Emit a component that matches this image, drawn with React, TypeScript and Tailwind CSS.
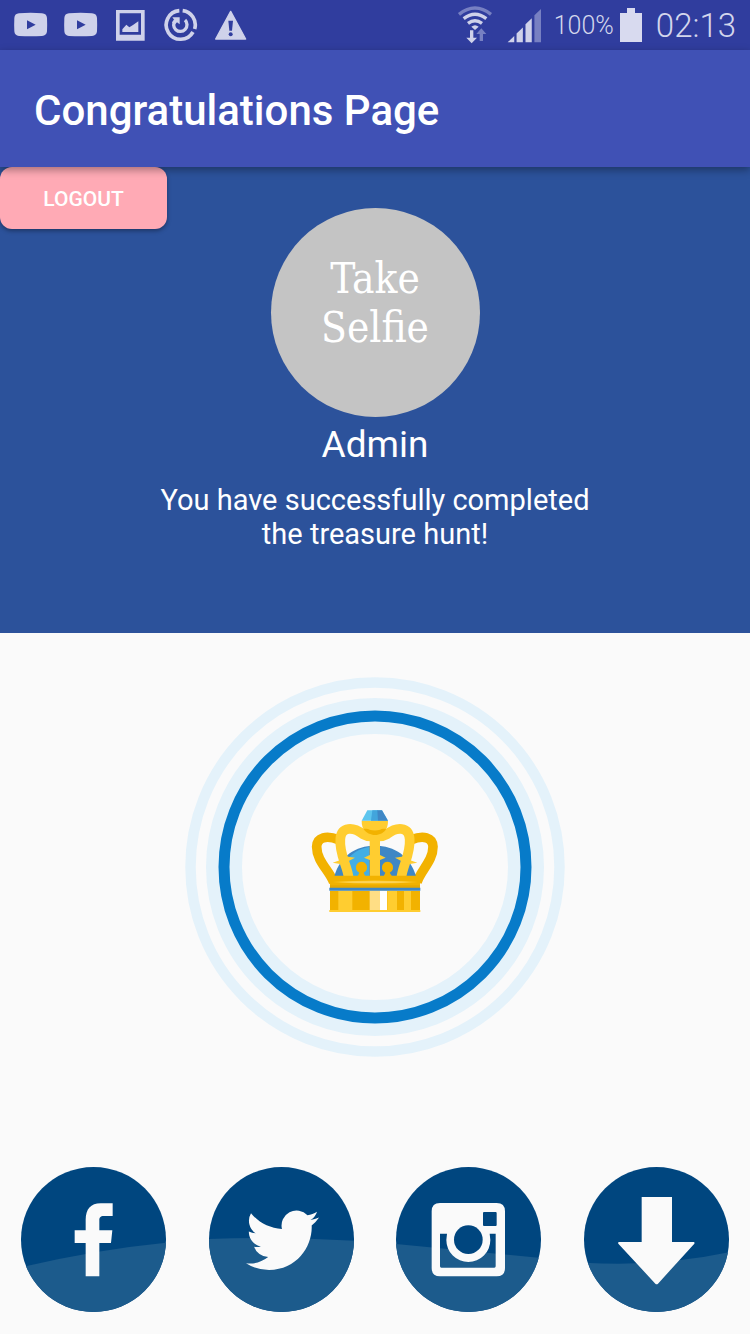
import type { ReactNode } from "react";

const INK = "#cfd2ea";
const NAVY = "#00467f";
const TINT = "#1c5b8c";

function YoutubeIcon() {
  return (
    <svg viewBox="42 24 102 102" className="size-[34px]" aria-hidden="true">
      <path
        fillRule="evenodd"
        fill={INK}
        d="M57 40Q92 37 126 40Q140 41 141 54Q142 74 141 94Q140 107 126 108Q92 110 57 108Q44 107 43 94Q42 74 43 54Q44 41 57 40ZM81 61V88L107 74Z"
      />
    </svg>
  );
}

function PictureIcon() {
  return (
    <svg viewBox="342 24 102 102" className="size-[34px]" aria-hidden="true">
      <path fillRule="evenodd" fill={INK} d="M348 30H434V122H348ZM359 40V104H423V40Z" />
      <path fill={INK} d="M367 96V88L379 74L388 82L399 75L415 64V96Z" />
    </svg>
  );
}

function SyncIcon() {
  return (
    <svg viewBox="492 24 102 102" className="size-[34px]" aria-hidden="true">
      <g fill="none" stroke={INK} strokeWidth="11">
        <path d="M538 32A43 43 0 1 0 579 96" />
        <path d="M548 32A43 43 0 0 1 584 87" />
        <path d="M526 61A20 20 0 1 0 555 60" strokeWidth="10" />
      </g>
      <path fill={INK} d="M517 52H539V73L531 67L524 74L516 67L523 60Z" />
    </svg>
  );
}

function WarningIcon() {
  return (
    <svg viewBox="642 24 102 102" className="size-[34px]" aria-hidden="true">
      <path
        fill={INK}
        stroke={INK}
        strokeWidth="4"
        strokeLinejoin="round"
        d="M692 34L737 117H647Z"
      />
      <path fill="#303d9e" d="M685 62H699L696 92H688Z" />
      <circle cx="692" cy="103" r="6" fill="#303d9e" />
    </svg>
  );
}

function WifiIcon() {
  return (
    <svg viewBox="52 15 106 120" className="h-10 w-9" aria-hidden="true">
      <g fill="none" stroke={INK} strokeWidth="10">
        <path d="M57 43Q105 5 153 43" stroke="#7780c2" />
        <path d="M71 56Q105 29 139 56" />
        <path d="M84 70Q105 54 126 70" />
      </g>
      <path fill={INK} d="M94 80Q105 71 116 80L105 90Z" />
      <path fill={INK} d="M90 91H100V113H111L95 130L79 113H90Z" />
      <path fill="#7780c2" d="M119 123V102H109L124 85L139 102H129V123Z" />
    </svg>
  );
}

function SignalIcon() {
  return (
    <svg viewBox="204 22 104 106" className="size-[35px]" aria-hidden="true">
      <g fill={INK}>
        <path d="M205 126L225 107V126Z" />
        <path d="M232 126V99L251 81V126Z" />
        <path d="M259 126V71L278 53V126Z" />
      </g>
      <path fill="#7780c2" d="M286 126V44L306 25V126Z" />
    </svg>
  );
}

function BatteryIcon() {
  return (
    <svg viewBox="0 0 22 34" className="h-[34px] w-[22px]" aria-hidden="true">
      <path fill="#d8daef" d="M7 0H15V5H22V34H0V5H7Z" />
    </svg>
  );
}

function Crown() {
  return (
    <g transform="translate(115 118) scale(0.33333)">
      <path
        fill="none"
        stroke="#f2b200"
        strokeWidth="29"
        d="M101 262C88 226 50 199 50 155C51 126 80 120 116 134M351 262C362 226 399 199 399 155C398 126 369 120 334 134"
      />
      <path fill="#3f87c5" d="M103 244C119 184 166 152 225 152C284 152 331 184 348 244Z" />
      <path fill="#42aee5" d="M134 203C153 175 180 160 207 156V244H150Z" />
      <path
        fill="none"
        stroke="#ffcd30"
        strokeWidth="29"
        d="M146 250C144 215 117 180 121 132C124 94 160 95 189 118C204 127 212 124 224 124C237 124 246 127 261 118C290 95 326 94 329 132C332 180 306 215 304 250"
      />
      <path fill="#ffcd30" d="M209 116H240V180L257 188L240 195V246H209V195L192 188L209 180Z" />
      <path
        fill="#ffcd30"
        d="M98 203L130 192L136 184L165 188L145 199L138 210ZM352 203L320 192L314 184L285 188L305 199L312 210Z"
      />
      <path fill="#ffcd30" d="M185 77H264C265 104 247 122 225 122C202 122 184 104 185 77Z" />
      <path fill="#f2b200" d="M190 101H259C245 126 206 126 190 101Z" />
      <path fill="#ffcd30" d="M196 96H253C240 110 209 110 196 96Z" />
      <path fill="#5dc5ee" d="M202 46H246L264 77H185Z" />
      <path fill="#42a5dc" d="M217 46H234V77H213Z" />
      <path fill="#3f87c5" d="M232 46H246L264 77H234Z" />
      <path
        fill="#f2b200"
        d="M173 244L178 233A17 17 0 1 1 191 233L196 244ZM251 244L256 233A17 17 0 1 1 269 233L276 244Z"
      />
      <path fill="#f2b200" d="M90 242H360V273H90Z" />
      <path fill="#ffcd30" d="M98 261Q225 252 353 261Q225 270 98 261Z" />
      <path fill="#fbd568" d="M115 261Q225 256 336 261Q225 266 115 261Z" />
      <path fill="#e7a800" d="M90 271H360V279H90Z" />
      <path fill="#f2b200" d="M90 287H360V349H90Z" />
      <path fill="#ffcd30" d="M115 287H157V349H115ZM262 287H291V349H262ZM312 287H333V349H312Z" />
      <path fill="#ffde85" d="M209 287H240V349H209Z" />
      <path fill="#ffffff" d="M240 287H261V349H240Z" />
      <path fill="#3f87c5" d="M88 278H361V287H88Z" />
      <path fill="#ffcd30" d="M88 345H361V351H88Z" />
    </g>
  );
}

function Medal() {
  return (
    <svg viewBox="0 0 380 380" className="size-[380px]" role="img" aria-label="Crown medal">
      <g fill="none">
        <circle cx="190" cy="190" r="184.5" stroke="#e4f2fa" strokeWidth="10.5" />
        <circle cx="190" cy="190" r="151" stroke="#e4f2fa" strokeWidth="36" />
        <circle cx="190" cy="190" r="151" stroke="#077bc9" strokeWidth="11" />
      </g>
      <Crown />
    </svg>
  );
}

type Badge = { name: string; wave: string; glyph: ReactNode };

const badges: Badge[] = [
  {
    name: "Facebook",
    wave: "M0 301Q220 248 435 227V435H0Z",
    glyph: (
      <path
        fill="#fafafa"
        d="M194 328V228H161V190H194V158C194 127 209 109 239 109H275V147H248C238 147 235 152 235 160V190H274L270 228H235V328Z"
      />
    ),
  },
  {
    name: "Twitter",
    wave: "M0 216Q220 208 435 221V435H0Z",
    glyph: (
      <path
        transform="translate(111 110) scale(9.15)"
        fill="#fafafa"
        d="M23.95 4.57a10 10 0 0 1-2.82.78 4.96 4.96 0 0 0 2.16-2.73c-.95.56-2 .96-3.13 1.18a4.92 4.92 0 0 0-8.38 4.48C7.69 8.1 4.07 6.13 1.64 3.16a4.92 4.92 0 0 0 1.52 6.57 4.9 4.9 0 0 1-2.23-.61v.06c0 2.38 1.7 4.37 3.95 4.83a5 5 0 0 1-2.21.08 4.94 4.94 0 0 0 4.6 3.42A9.87 9.87 0 0 1 0 19.54a14 14 0 0 0 7.55 2.21c9.05 0 14-7.5 14-13.98 0-.21 0-.42-.02-.63a10 10 0 0 0 2.42-2.57z"
      />
    ),
  },
  {
    name: "Instagram",
    wave: "M0 231L435 273V435H0Z",
    glyph: (
      <>
        <path
          fillRule="evenodd"
          fill="#fafafa"
          d="M132 108H302Q327 108 327 133V303Q327 328 302 328H132Q107 328 107 303V133Q107 108 132 108ZM264 135Q261 135 261 138V174Q261 177 264 177H299Q302 177 302 174V138Q302 135 299 135ZM132 200V298Q132 302 136 302H295Q299 302 299 298V200H281L283 219A66 66 0 0 1 151 219L153 200Z"
        />
        <circle cx="217" cy="218" r="43" fill={NAVY} />
      </>
    ),
  },
  {
    name: "Download",
    wave: "M0 287Q230 300 435 256V435H0Z",
    glyph: (
      <path
        fill="#fafafa"
        d="M173 90H264V225H329Q333 226 331 230L222 350Q218 354 214 350L103 230Q101 226 105 225H173Z"
      />
    ),
  },
];

function BadgeButton({ name, wave, glyph }: Badge) {
  return (
    <button type="button" aria-label={name} className="size-[145px] overflow-hidden rounded-full">
      <svg viewBox="0 0 435 435" className="size-full" aria-hidden="true">
        <rect width="435" height="435" fill={NAVY} />
        <path d={wave} fill={TINT} />
        {glyph}
      </svg>
    </button>
  );
}

export default function App() {
  return (
    <div className="flex min-h-screen flex-col bg-[#fafafa] font-['Roboto',sans-serif]">
      <div className="flex h-[50px] items-center justify-between bg-[#303d9e] px-3.5 text-[#d3d6ec]">
        <div className="flex items-center gap-4">
          <YoutubeIcon />
          <YoutubeIcon />
          <PictureIcon />
          <SyncIcon />
          <WarningIcon />
        </div>
        <div className="flex items-center">
          <WifiIcon />
          <div className="ml-3.5">
            <SignalIcon />
          </div>
          <span className="ml-3 pt-0.5 text-[25px] leading-8 font-light">100%</span>
          <div className="ml-1.5">
            <BatteryIcon />
          </div>
          <span className="ml-3.5 pt-0.5 text-[33px] leading-10 font-light">02:13</span>
        </div>
      </div>

      <header className="relative z-10 flex h-[117px] items-center bg-[#4051b5] px-[34px] pt-1 shadow-[0_3px_8px_rgba(0,0,0,0.35)]">
        <h1 className="text-[42px] leading-12 font-medium text-white">Congratulations Page</h1>
      </header>

      <main className="flex grow flex-col">
        <section className="bg-[#2c529b] pb-[82px] text-center text-white">
          <div className="grid grid-cols-[1fr_auto_1fr]">
            <button
              type="button"
              className="h-[62px] w-[167px] justify-self-start rounded-xl bg-[#ffaab5] pt-1 text-[21px] font-medium shadow-[0_2px_4px_rgba(0,0,0,0.35)]"
            >
              LOGOUT
            </button>
            <button
              type="button"
              className="mt-[41px] size-[209px] rounded-full bg-[#c4c4c4] px-10 pb-5 font-['DejaVu_Serif_Condensed','DejaVu_Serif',serif] text-[42px] leading-[49px]"
            >
              Take Selfie
            </button>
          </div>
          <h2 className="mt-1 text-[37px] leading-12">Admin</h2>
          <p className="mx-auto mt-3.5 max-w-[460px] text-[29px] leading-[34px]">
            You have successfully completed the treasure hunt!
          </p>
        </section>

        <section className="flex justify-center py-11">
          <Medal />
        </section>

        <nav aria-label="Share" className="mt-auto grid grid-cols-4 justify-items-center pb-[22px]">
          {badges.map((badge) => (
            <BadgeButton key={badge.name} {...badge} />
          ))}
        </nav>
      </main>
    </div>
  );
}
